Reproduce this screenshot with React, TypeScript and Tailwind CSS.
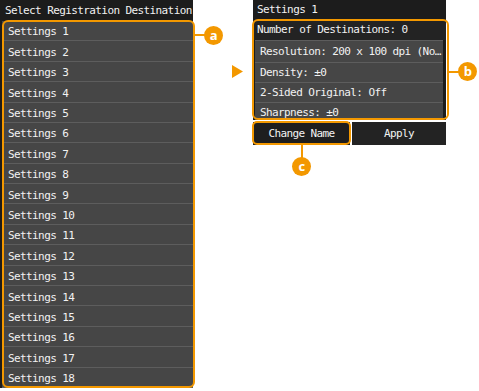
import React from 'react';

const ORANGE = '#f39800';

const Callout = ({ letter, className }: { letter: string; className: string }) => (
  <div
    className={`absolute w-[19px] h-[19px] rounded-full bg-[#f39800] text-white flex items-center justify-center text-[13px] font-bold leading-none ${className}`}
    style={{ fontFamily: '"Open Sans", sans-serif' }}
  >
    <span className="-mt-[1px]">{letter}</span>
  </div>
);

const mono = { fontFamily: '"DejaVu Sans Mono", monospace' };

const App = () => {
  const settings = Array.from({ length: 18 }, (_, i) => `Settings ${i + 1}`);
  const details = [
    { t: 'Resolution: 200 x 100 dpi (No…', h: 'h-[22px] pt-[2px]' },
    { t: 'Density: ±0', h: 'h-[20px] pt-[1px]' },
    { t: '2-Sided Original: Off', h: 'h-[20px] pt-[1px]' },
    { t: 'Sharpness: ±0', h: 'h-[20px] pt-[1px]' },
  ];

  return (
    <div className="relative w-[479px] h-[391px] bg-white flex overflow-hidden text-[#f2f2f2] text-[11px] tracking-[-0.6px]" style={mono}>
      {/* left screen */}
      <div className="w-[193px] h-[388px] bg-[#1c1c1c] flex flex-col">
        <div className="h-[21px] pl-[5px] pt-[1px] flex items-center">Select Registration Destination</div>
        <div className="flex flex-col pl-[2px]">
          {settings.map((s) => (
            <div key={s} className="h-[20.4px] bg-[#464646] border-b border-[#5d5d5d] pl-[6px] pt-[4px] flex items-center">
              {s}
            </div>
          ))}
        </div>
      </div>

      <div className="w-[60px]" />

      {/* right screen */}
      <div className="w-[193px] flex flex-col">
        <div className="bg-[#1c1c1c] flex flex-col">
          <div className="h-[20px] pl-[4px] pt-[1px] flex items-center">Settings 1</div>
          <div className="h-[20px] pl-[4px] flex items-center bg-[#232323]">Number of Destinations: 0</div>
          <div className="flex flex-col h-[80px] overflow-hidden pl-[2px] pr-[3px]">
            {details.map((d) => (
              <div key={d.t} className={`${d.h} shrink-0 bg-[#464646] border-t border-[#5d5d5d] pl-[5px] flex items-center whitespace-nowrap`}>
                {d.t}
              </div>
            ))}
          </div>
          <div className="h-[25px] pt-[2px] flex gap-[2px] bg-white">
            <div className="w-[97px] bg-[#1e1e1e] pt-[1px] flex items-center justify-center">Change Name</div>
            <div className="flex-1 bg-[#232323] pt-[1px] flex items-center justify-center">Apply</div>
          </div>
        </div>
      </div>

      {/* highlight outlines */}
      <div className="absolute left-[2px] top-[20px] w-[193px] h-[368px] border-2 border-[#f39800] rounded-[6px]" />
      <div className="absolute left-[252px] top-[19px] w-[197px] h-[101px] border-2 border-[#f39800] rounded-[6px]" />
      <div className="absolute left-[252px] top-[121px] w-[99px] h-[24px] border-2 border-[#f39800] rounded-[5px]" />

      {/* leader lines */}
      <div className="absolute left-[195px] top-[34px] w-[10px] h-[2px] bg-[#f39800]" />
      <div className="absolute left-[449px] top-[71px] w-[10px] h-[2px] bg-[#f39800]" />
      <div className="absolute left-[301px] top-[145px] w-[2px] h-[14px] bg-[#f39800]" />

      <Callout letter="a" className="left-[204px] top-[26px]" />
      <Callout letter="b" className="left-[458px] top-[62px]" />
      <Callout letter="c" className="left-[292px] top-[157px]" />

      {/* arrow */}
      <svg className="absolute left-[232px] top-[65px]" width="12" height="14" viewBox="0 0 12 14">
        <polygon points="0,0 11,6.5 0,13" fill={ORANGE} />
      </svg>
    </div>
  );
};

export default App;
